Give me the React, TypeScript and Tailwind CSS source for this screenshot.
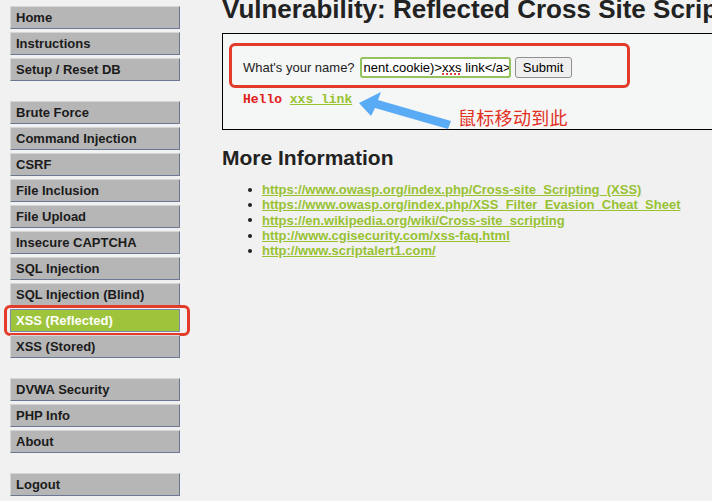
import React from 'react'

const groups: string[][] = [
  ['Home', 'Instructions', 'Setup / Reset DB'],
  [
    'Brute Force',
    'Command Injection',
    'CSRF',
    'File Inclusion',
    'File Upload',
    'Insecure CAPTCHA',
    'SQL Injection',
    'SQL Injection (Blind)',
    'XSS (Reflected)',
    'XSS (Stored)',
  ],
  ['DVWA Security', 'PHP Info', 'About'],
  ['Logout'],
]

const links = [
  'https://www.owasp.org/index.php/Cross-site_Scripting_(XSS)',
  'https://www.owasp.org/index.php/XSS_Filter_Evasion_Cheat_Sheet',
  'https://en.wikipedia.org/wiki/Cross-site_scripting',
  'http://www.cgisecurity.com/xss-faq.html',
  'http://www.scriptalert1.com/',
]

function MenuItem({ label }: { label: string }) {
  const active = label === 'XSS (Reflected)'
  return (
    <div className="relative">
      <div
        className={
          active
            ? 'h-[23px] flex items-center pl-[5px] border border-[#7b88a8] bg-[#9dc43b] text-white text-[13px] font-bold'
            : 'h-[23px] flex items-center pl-[5px] border-t border-l border-t-[#d6d6d6] border-l-[#d6d6d6] border-b border-r border-b-[#6c7892] border-r-[#6c7892] bg-[#b6b6b6] text-[#1b1b1b] text-[13px] font-bold'
        }
      >
        {label}
      </div>
      {active && (
        <div className="absolute left-[-6px] right-[-10px] top-[-4px] bottom-[-4px] border-[3px] border-[#e23b2a] rounded-[6px]" />
      )}
    </div>
  )
}

export default function App() {
  return (
    <div
      className="w-full h-[501px] overflow-hidden bg-[#f1f1f1] flex"
      style={{ fontFamily: '"Liberation Sans", Arial, sans-serif' }}
    >
      {/* sidebar */}
      <div className="w-[170px] ml-[10px] pt-[6px] flex flex-col gap-[20px] shrink-0">
        {groups.map((g, i) => (
          <div key={i} className="flex flex-col gap-[3px]">
            {g.map((l) => (
              <MenuItem key={l} label={l} />
            ))}
          </div>
        ))}
      </div>

      {/* main */}
      <div className="ml-[42px] flex-1 min-w-0">
        <h1 className="mt-[-4px] text-[26px] leading-[26px] font-bold text-[#222] whitespace-nowrap">
          Vulnerability: Reflected Cross Site Scripting (XSS)
        </h1>

        <div className="relative mt-[11px] w-[520px] h-[97px] border border-black bg-[#f5f6f6] pl-[20px] pt-[23px]">
          <div className="flex items-center text-[13px] text-[#222]">
            <span>What's your name?</span>
            <div className="ml-[5px] w-[151px] h-[21px] border-2 border-[#94c25f] rounded-[3px] bg-white flex items-center pl-[2px] overflow-hidden whitespace-nowrap text-[13px] text-black">
              nent.cookie)&gt;
              <span className="underline decoration-dotted decoration-[#e0403a] decoration-2 underline-offset-2">xxs</span>
              &nbsp;link&lt;/a&gt;
            </div>
            <button className="ml-[4px] h-[21px] w-[57px] border border-[#8f8f8f] rounded-[3px] bg-[#efefef] text-[13px] text-black">
              Submit
            </button>
          </div>

          <div
            className="mt-[14px] text-[13px] font-bold leading-[15px] text-[#e0201a] whitespace-pre"
            style={{ fontFamily: '"Liberation Mono", "Courier New", monospace' }}
          >
            Hello <span className="text-[#98c232] underline">xxs link</span>
          </div>

          {/* annotation: red box around form */}
          <div className="absolute left-[6px] top-[9px] w-[401px] h-[45px] border-[3px] border-[#e23b2a] rounded-[6px]" />

          {/* annotation: blue arrow */}
          <svg className="absolute left-[134px] top-[58px]" width="96" height="40" viewBox="0 0 96 40">
            <path d="M2 11 L24 0 L21 8 L94 29 L91 37 L18 16 L14 24 Z" fill="#5aabf5" />
          </svg>

          {/* annotation: chinese text */}
          <div
            className="absolute left-[235px] top-[73px] text-[18px] leading-[20px] text-[#e2301f] whitespace-nowrap tracking-[0.3px]"
            style={{ fontFamily: '"Noto Sans CJK SC", sans-serif' }}
          >
            鼠标移动到此
          </div>
        </div>

        <h2 className="mt-[17px] text-[21px] leading-[22px] font-bold text-[#222]">More Information</h2>
        <ul className="mt-[13px] ml-[26px] flex flex-col text-[13px] leading-[15.3px] font-bold">
          {links.map((l) => (
            <li key={l} className="flex items-center">
              <span className="w-[4px] h-[4px] rounded-full bg-[#222] mr-[10px]" />
              <span className="text-[#98c232] underline">{l}</span>
            </li>
          ))}
        </ul>
      </div>
    </div>
  )
}
